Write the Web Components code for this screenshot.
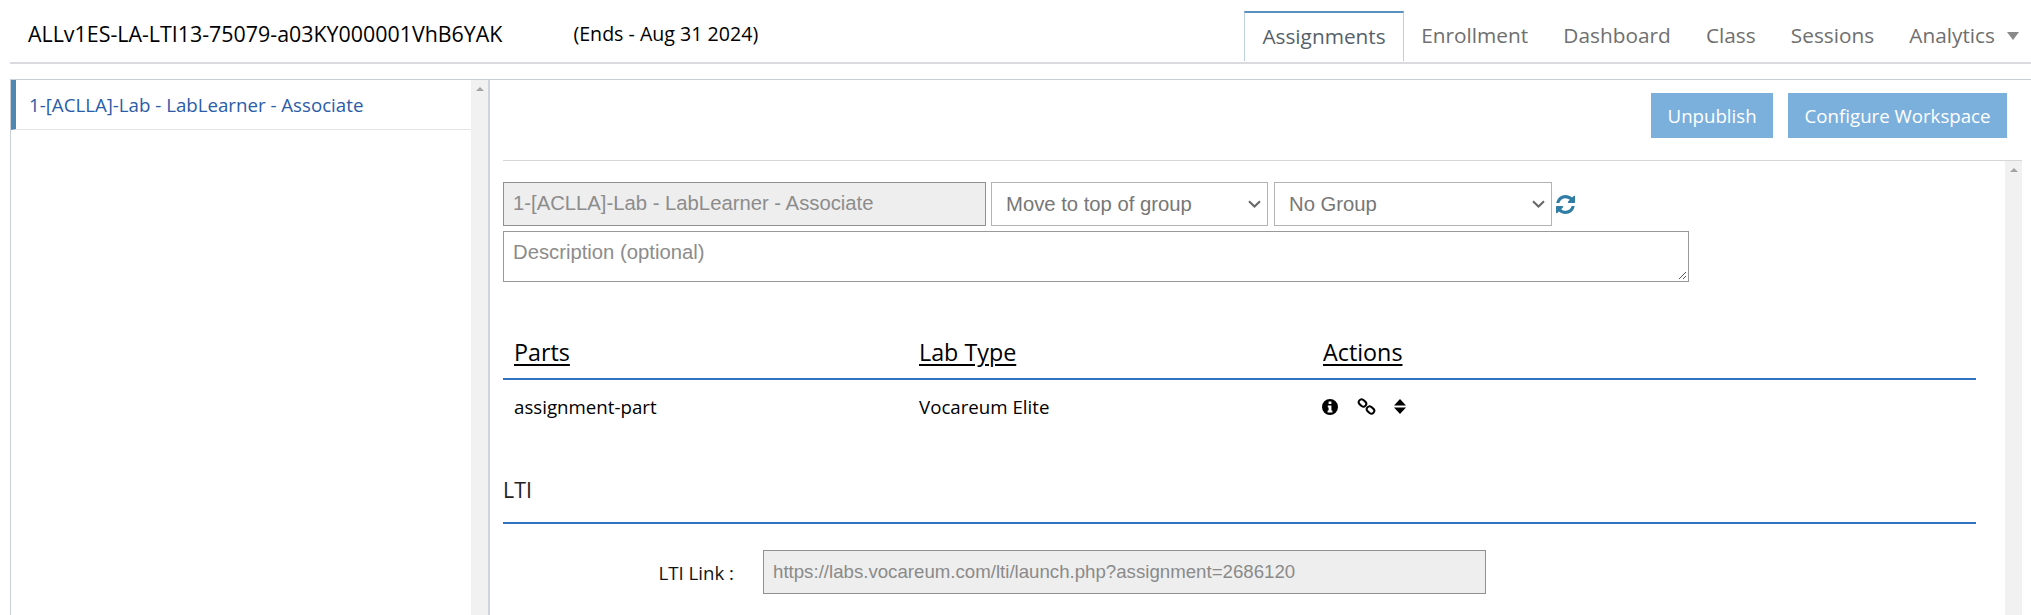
<!DOCTYPE html>
<html><head><meta charset="utf-8"><style>
html,body{margin:0;padding:0;background:#fff;height:100%;overflow:hidden}
body{font-family:"Open Sans",sans-serif;color:#000}
</style></head><body>
<app-page>
 <top-bar title-text="ALLv1ES-LA-LTI13-75079-a03KY000001VhB6YAK" ends="(Ends - Aug 31 2024)"></top-bar>
 <div style="display:flex;height:536px;margin:15px 0 0 10px;border-top:1px solid #c8cfda">
  <side-list></side-list>
  <main-pane></main-pane>
 </div>
</app-page>
<script>
function def(name,html){customElements.define(name,class extends HTMLElement{connectedCallback(){if(this.shadowRoot)return;const s=this.attachShadow({mode:'open'});s.innerHTML=typeof html==='function'?html(this):html;}});}
def('app-page',`<style>:host{display:block;height:615px;overflow:hidden}</style><slot></slot>`);
def('top-bar',h=>`<style>
:host{display:flex;justify-content:space-between;height:62px;margin-left:10px;border-bottom:2px solid #d9dbdf;font-family:"Open Sans",sans-serif;box-sizing:content-box}
.t{display:flex;align-items:center;padding:5px 0 0 18px;box-sizing:border-box;height:62px}
.t b{font-weight:400;font-size:21.4px;color:#000}
.t span{margin-left:71px;font-size:19.6px;color:#000}
nav{display:flex;height:61px;padding-top:11px;box-sizing:border-box;margin-right:12px}
a{display:flex;align-items:center;padding:0 17.6px 2px;font-size:20.8px;color:#6f6f6f;height:50px;box-sizing:border-box}
a.on{color:#555f6b;border:1px solid #bcd0e0;border-top:2px solid #5b8fbd;border-bottom:none;padding:0 17px 2px;background:#fff}
i{width:0;height:0;border-left:6px solid transparent;border-right:6px solid transparent;border-top:8px solid #8a8a8a;margin-left:12px;margin-top:2px}
</style><div class="t"><b>${h.getAttribute('title-text')}</b><span>${h.getAttribute('ends')}</span></div>
<nav><a class="on">Assignments</a><a>Enrollment</a><a>Dashboard</a><a>Class</a><a>Sessions</a><a style="padding-right:0">Analytics<i></i></a></nav>`);
def('side-list',`<style>
:host{display:flex;width:477px;flex:none;border-left:1px solid #c8cfda;border-right:2px solid #cdd3df;box-sizing:content-box;height:100%}
.l{flex:1;min-width:0}
.i{height:49px;border-left:5px solid #4f87b3;border-bottom:1px solid #e3e5e8;padding-left:13px;display:flex;align-items:center;color:#2a5ca8;font-size:18.7px;box-sizing:content-box}
.s{width:17px;background:#f1f1f1;flex:none;display:flex;justify-content:center;padding-top:7px;box-sizing:border-box}
.s i{width:0;height:0;border-left:4px solid transparent;border-right:4px solid transparent;border-bottom:4px solid #a3a3a3}
</style><div class="l"><div class="i">1-[ACLLA]-Lab - LabLearner - Associate</div></div><div class="s"><i></i></div>`);
def('action-btn',`<style>:host{display:flex;align-items:center;justify-content:center;height:45px;padding:0 16.5px;background:#7bb0dd;color:#fff;font-size:18.66px;font-family:"Open Sans",sans-serif}</style><slot></slot>`);
def('main-pane',`<style>
:host{display:flex;flex-direction:column;flex:1;min-width:0;padding:0 9px 0 13px;box-sizing:border-box;font-family:"Open Sans",sans-serif}
.bar{display:flex;justify-content:flex-end;gap:15px;padding:13px 15px 22px 0;border-bottom:1px solid #d6d6d6}
.body{flex:1;display:flex;min-height:0}
.c{flex:1;min-width:0;padding-top:21px}
.s{width:17px;background:#f1f1f1;flex:none;display:flex;justify-content:center;padding-top:7px;box-sizing:border-box}
.s i{width:0;height:0;border-left:4px solid transparent;border-right:4px solid transparent;border-bottom:4px solid #a3a3a3}
.row{display:flex;align-items:center;gap:5px;height:44px}
.f{box-sizing:border-box;height:44px;border:1px solid #999;font-family:"Liberation Sans",Arial,sans-serif;font-size:20.27px;color:#8c8c8c;display:flex;align-items:center;background:#fff}
.ro{background:#eee;width:483px;padding:0 0 2px 9px;border-color:#909090}
.sel{padding-left:14px;justify-content:space-between;padding-right:6px;border-color:#b3b3b3;color:#777}
.ta{width:1186px;height:51px;margin-top:5px;align-items:flex-start;padding:9px 9px;color:#8c8c8c;position:relative;border-color:#999}
.ta svg{position:absolute;right:1px;bottom:1px}
table{border-collapse:collapse;width:1473px;margin-top:49px}
th{font-weight:400;font-size:23.3px;text-align:left;padding:0 0 6px 11px;height:48px;text-decoration:underline;border-bottom:2px solid #2f72bf;box-sizing:border-box;color:#000;text-underline-offset:3px}
td{font-size:18.7px;height:53px;padding:0 0 0 11px;color:#000}
.ic{display:flex;align-items:center;margin-left:-1px}
h4{margin:38px 0 0;font-weight:400;font-size:21.33px;height:51px;width:1473px;border-bottom:2px solid #2f72bf;color:#222;box-sizing:content-box;padding:0;line-height:38px}
.lti{display:flex;align-items:center;margin-top:26px}
.lti label{width:231px;text-align:right;font-size:18.66px;color:#111}
.lti .f{margin-left:29px;width:723px;background:#eee;padding-left:9px;border-color:#909090;color:#8a8a8a;font-size:18.66px}
</style>
<div class="bar"><action-btn>Unpublish</action-btn><action-btn>Configure Workspace</action-btn></div>
<div class="body"><div class="c">
<div class="row"><div class="f ro">1-[ACLLA]-Lab - LabLearner - Associate</div>
<div class="f sel" style="width:277px">Move to top of group<svg width="13" height="8" viewBox="0 0 13 8"><path d="M1 1.200l5.500 5.300 5.500-5.300" fill="none" stroke="#666" stroke-width="2"/></svg></div>
<div class="f sel" style="width:278px;margin-left:1px">No Group<svg width="13" height="8" viewBox="0 0 13 8"><path d="M1 1.200l5.500 5.300 5.500-5.300" fill="none" stroke="#666" stroke-width="2"/></svg></div>
<svg width="19" height="19" viewBox="0 0 1536 1536" style="margin-left:-1px"><path fill="#2f7ca5" d="M1511 928q0 5-1 7-64 268-268 434.500t-478 166.500q-146 0-282.500-55t-243.500-157l-129 129q-19 19-45 19t-45-19-19-45v-448q0-26 19-45t45-19h448q26 0 45 19t19 45-19 45l-137 137q71 66 161 102t187 36q134 0 250-65t186-179q11-17 53-117 8-23 30-23h192q13 0 22.500 9.500t9.500 22.500zm25-800v448q0 26-19 45t-45 19h-448q-26 0-45-19t-19-45 19-45l138-138q-148-137-349-137-134 0-250 65t-186 179q-11 17-53 117-8 23-30 23h-199q-13 0-22.500-9.500t-9.500-22.500v-7q65-268 270-434.500t480-166.500q146 0 284 55.500t245 156.500l130-129q19-19 45-19t45 19 19 45z"/></svg></div>
<div class="f ta">Description (optional)<svg width="10" height="10" viewBox="0 0 10 10"><path d="M9 2L2 9M9 6L6 9" stroke="#555" stroke-width="1"/></svg></div>
<table><tr><th style="width:405px">Parts</th><th style="width:404px">Lab Type</th><th>Actions</th></tr>
<tr><td>assignment-part</td><td>Vocareum Elite</td><td><div class="ic">
<svg width="16" height="16" viewBox="0 0 16 16"><path fill="#000" fill-rule="evenodd" d="M8 0a8 8 0 1 0 0 16A8 8 0 0 0 8 0zM6.600 2.600h2.800v2.400H6.600zM5.800 6.400h3.600v5.200h1v2H5.600v-2h1V8.400h-.8z"/></svg>
<svg style="margin-left:19px" width="19" height="17" viewBox="0 0 19 17" fill="none" stroke="#000" stroke-width="2"><rect x="1.500" y="2.200" width="8" height="5.600" rx="2.800" transform="rotate(40 5.500 5)"/><rect x="9.500" y="9.200" width="8" height="5.600" rx="2.800" transform="rotate(40 13.500 12)"/></svg>
<svg style="margin-left:18px" width="12" height="15" viewBox="0 0 12 15"><path fill="#000" d="M6 0l6 6.500H0zM0 8.500h12L6 15z"/></svg>
</div></td></tr></table>
<h4>LTI</h4>
<div class="lti"><label>LTI Link :</label><div class="f">https://labs.vocareum.com/lti/launch.php?assignment=2686120</div></div>
</div><div class="s"><i></i></div></div>`);
</script></body></html>
